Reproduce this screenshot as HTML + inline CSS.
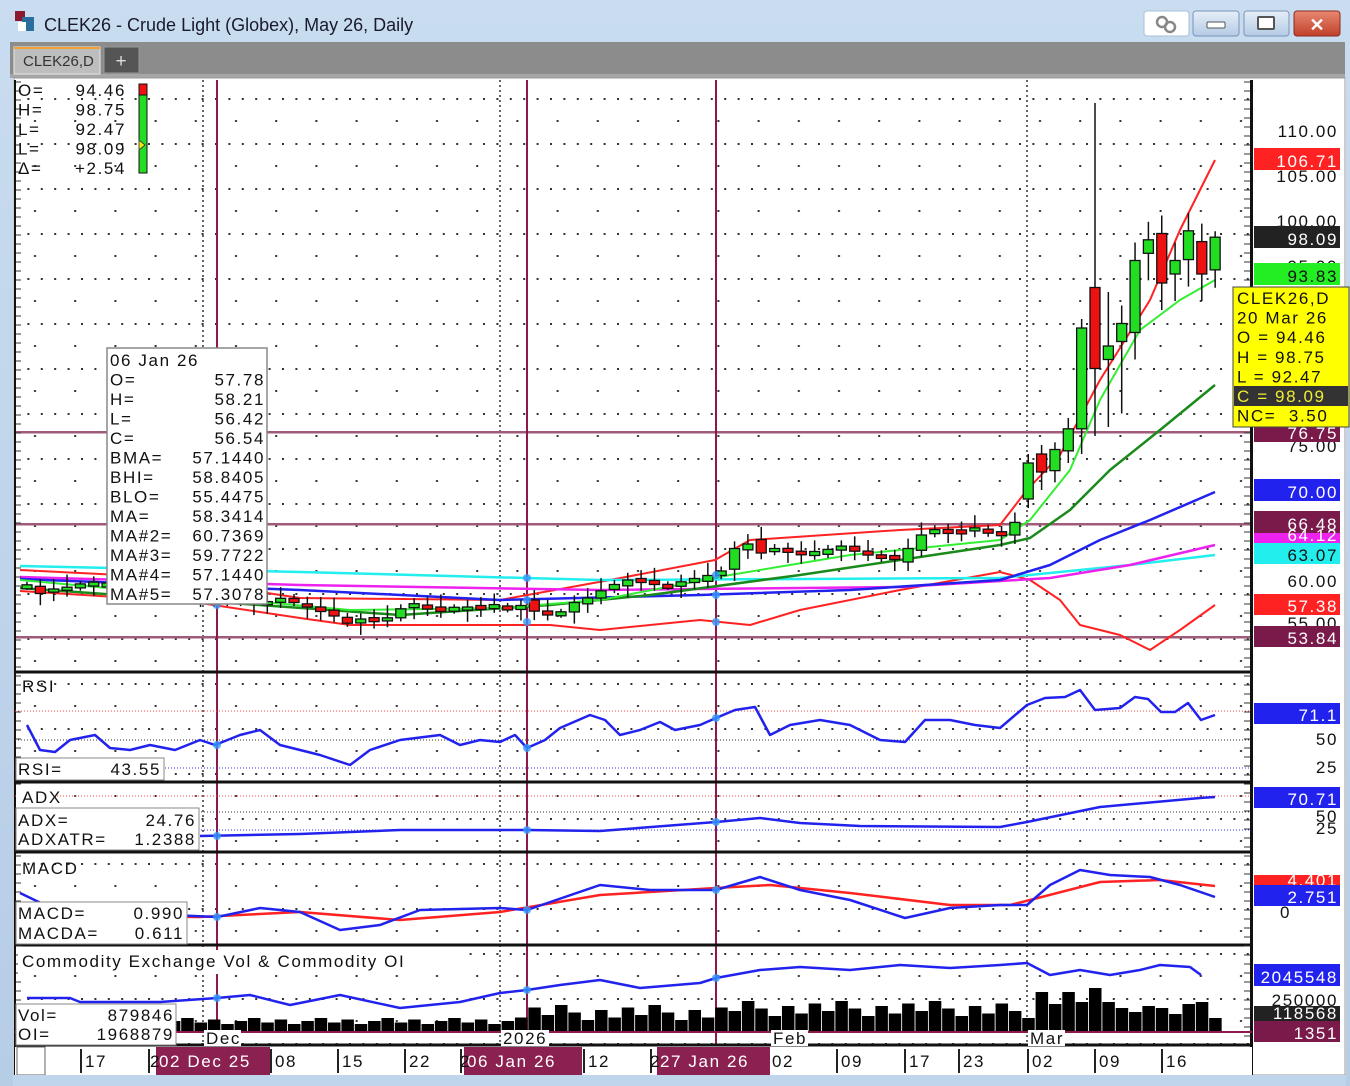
<!DOCTYPE html>
<html><head><meta charset="utf-8"><style>
html,body{margin:0;padding:0;width:1350px;height:1086px;overflow:hidden;background:#bfd5ec}
svg{display:block}
text{font-family:"Liberation Sans",sans-serif}
.m{font-size:17px;letter-spacing:1.6px;fill:#111}
</style></head><body>
<svg id="s" width="1350" height="1086" xmlns="http://www.w3.org/2000/svg">
<defs>
<linearGradient id="tb" x1="0" y1="0" x2="0" y2="1"><stop offset="0" stop-color="#c9dcf0"/><stop offset="1" stop-color="#b6cde6"/></linearGradient>
<linearGradient id="bb" x1="0" y1="0" x2="0" y2="1"><stop offset="0" stop-color="#e6eef8"/><stop offset="1" stop-color="#b4cbe6"/></linearGradient>
<linearGradient id="rb" x1="0" y1="0" x2="0" y2="1"><stop offset="0" stop-color="#e88870"/><stop offset="1" stop-color="#c0402a"/></linearGradient>
<pattern id="dots" x="14" y="0" width="40.2" height="45" patternUnits="userSpaceOnUse"><rect x="0" y="8" width="2" height="2" fill="#333"/><rect x="13.4" y="8" width="2" height="2" fill="#333"/><rect x="26.8" y="8" width="2" height="2" fill="#333"/><rect x="20" y="30" width="2" height="2" fill="#333"/></pattern>
</defs>
<rect width="1350" height="1086" fill="url(#tb)"/>
<rect x="15" y="11" width="10" height="10" fill="#8b1a2e"/><rect x="22" y="17" width="12" height="14" fill="#2a6e9e"/><rect x="18" y="22" width="8" height="9" fill="#fff"/>
<text x="44" y="31" font-size="18" fill="#1a1a2e">CLEK26 - Crude Light (Globex), May 26, Daily</text>
<rect x="1144" y="11" width="45" height="25" rx="3" fill="#fff" stroke="#a9bfd9"/><circle cx="1162" cy="22" r="5" fill="none" stroke="#888" stroke-width="2.5"/><circle cx="1170" cy="27" r="5" fill="none" stroke="#888" stroke-width="2.5"/>
<rect x="1193" y="11" width="46" height="25" rx="3" fill="url(#bb)" stroke="#7a95b8"/><rect x="1207" y="22" width="18" height="6" rx="1" fill="#fff" stroke="#555"/>
<rect x="1244" y="11" width="45" height="25" rx="3" fill="url(#bb)" stroke="#7a95b8"/><rect x="1258" y="17" width="16" height="12" rx="1" fill="#fff" stroke="#555" stroke-width="2"/>
<rect x="1294" y="11" width="46" height="25" rx="3" fill="url(#rb)" stroke="#8a2a20"/><text x="1317" y="31" font-size="18" font-weight="bold" fill="#fff" text-anchor="middle">✕</text>
<rect x="10" y="42" width="1335" height="36" fill="#8c8c8c"/>
<rect x="10" y="74" width="1335" height="4" fill="#a6a6a6"/>
<rect x="14" y="47" width="86" height="27" fill="#bdbdbd" stroke="#e8e8e8"/><rect x="14" y="47" width="86" height="2" fill="#f0a030"/>
<text x="23" y="66" font-size="15" fill="#333">CLEK26,D</text>
<rect x="104" y="47" width="35" height="26" fill="#555" stroke="#999"/><text x="121" y="67" font-size="19" fill="#ddd" text-anchor="middle">+</text>
<rect x="13" y="78" width="1333" height="997" fill="#fff"/>
<rect x="14" y="78" width="1331" height="997" fill="none" stroke="#999" stroke-width="1"/>
<rect x="15" y="80" width="1237" height="965" fill="url(#dots)"/>
<g id="g"></g>
</svg>
<script>
var S=document.getElementById('g'),NS='http://www.w3.org/2000/svg';
function el(t,a,p){var e=document.createElementNS(NS,t);for(var k in a)e.setAttribute(k,a[k]);(p||S).appendChild(e);return e}
function pl(pts,c,w,d){el('polyline',{points:pts,fill:'none',stroke:c,'stroke-width':w||2,'stroke-dasharray':d||'','stroke-linejoin':'round'})}
function tx(x,y,s,o){o=o||{};var f=o.fill;delete o.fill;var e=el('text',Object.assign({x:x,y:y,'class':'m'},o));if(f)e.style.fill=f;e.style.whiteSpace='pre';e.textContent=s;return e}
[203,500,1027].forEach(function(x){pl(x+',80 '+x+',1045','#333',1.5,'2,3')});
[432,524,637].forEach(function(y){el('rect',{x:15,y:y-1,width:1237,height:2.5,fill:'#a05a7a'})});
[217,527,716].forEach(function(x){el('rect',{x:x-1,y:80,width:2,height:965,fill:'#8b1a4a'})});
pl('20,591 100,596 200,603 300,618 350,625 550,625 600,630 700,620 750,625 800,610 900,590 1000,572 1030,580 1060,600 1080,625 1120,635 1150,650 1180,630 1215,605','#f22',2);
pl('20,570 120,575 215,585 300,598 500,600 610,580 715,560 750,540 900,530 1000,525 1027,490 1060,455 1100,380 1150,300 1180,230 1215,160','#f22',2);
pl('20,566 300,572 600,580 1000,578 1130,565 1215,555','#2ee',2.5);
pl('20,577 300,585 600,590 900,587 1050,578 1130,565 1215,545','#e2e',2.5);
pl('20,579 300,590 500,600 700,595 850,590 1000,580 1050,565 1100,540 1150,520 1215,492','#22e',2.5);
pl('20,588 400,615 550,605 650,595 800,575 900,560 1000,545 1030,538 1070,510 1110,470 1160,430 1215,385','#1a8a1a',2.5);
pl('20,580 350,610 500,608 600,600 730,575 850,555 1000,540 1030,520 1070,470 1100,400 1140,330 1180,300 1215,280','#3e3',2);
var C=[59.3,58.5,59,59.2,59.4,59.6,59.5,59.3,59,58.8,58.9,58.7,58.5,58.3,58,57.8,57.5,57.4,57.6,57.8,57.5,57,56.5,56,55.2,55.5,55.6,55.8,56.8,57.2,57,56.5,56.8,57,56.9,57.1,56.8,57,56.54,56.2,56.3,57.5,58,58.8,59.5,60,59.8,59.5,59.3,59.8,60,60.5,61,63.5,64,63,63.5,63.2,62.8,63,63.4,63.6,63.2,62.8,62.4,62.3,63.5,65,65.6,65.4,65.3,65.8,65.2,65,66.4,73,72,74.5,76.8,88,83.5,86,88.5,95.5,97.8,93,95.5,98.8,94,98.09];
var O={38:57.78,53:61.2,55:64.5,66:62,67:63.3,74:65,75:69,76:74,80:92.5,81:84.5,82:86.5,83:87.5,84:96.3,85:98.5,86:94,87:95.6,88:97.6,89:94.46};
var HL={80:[113,76],81:[92,77],89:[98.75,92.47],79:[89,74],78:[78,73],76:[75,70],75:[74,68]};
function Y(p){return 130+(110-p)*9}
for(var i=0;i<C.length;i++){var x=27+i*13.35,c=C[i],o=O[i]!==undefined?O[i]:(i>0?C[i-1]+((i*7)%3-1)*0.15:c),h,l;
 if(HL[i]){h=HL[i][0];l=HL[i][1]}else{h=Math.max(o,c)+0.5+((i*5)%4)*0.3;l=Math.min(o,c)-0.4-((i*3)%4)*0.3}
 if(i>=79&&!HL[i]){h=Math.max(o,c)+2;l=Math.min(o,c)-(i==82?8:3)}
 var col=c>=o?'#2d2':'#e11';
 el('line',{x1:x,y1:Y(h),x2:x,y2:Y(l),stroke:'#111','stroke-width':1.5});
 var t=Y(Math.max(o,c)),b=Y(Math.min(o,c));if(b-t<3){t-=1.5;b=t+4}
 el('rect',{x:x-5,y:t,width:10,height:b-t,fill:col,stroke:'#111','stroke-width':1.3});}
[672,782,852,945,1045].forEach(function(y){el('rect',{x:15,y:y-1.5,width:1237,height:3,fill:'#111'})});
el('rect',{x:1250,y:80,width:3,height:995,fill:'#111'});
el('rect',{x:14,y:80,width:2,height:995,fill:'#111'});
for(var y=82;y<1045;y+=9)el('line',{x1:1244,y1:y,x2:1250,y2:y,stroke:'#333'});
for(var y=82;y<1045;y+=9)el('line',{x1:16,y1:y,x2:21,y2:y,stroke:'#333'});
pl('15,711 1250,711','#f44',1,'1,2');pl('15,740 1250,740','#333',1,'1,2');pl('15,768 1250,768','#33f',1,'1,2');
pl('27,725 40,750 55,752 70,740 95,735 110,748 130,750 150,745 175,750 200,740 215,745 240,735 260,730 280,745 300,750 320,755 350,765 370,750 400,740 440,735 460,745 480,740 500,742 515,735 527,748 545,740 560,728 590,715 605,720 620,735 640,730 660,722 675,730 700,725 716,718 735,710 755,707 770,735 790,725 820,720 850,725 880,740 905,742 925,720 950,720 975,725 1000,728 1027,705 1045,698 1065,697 1080,690 1095,710 1120,708 1135,697 1148,699 1161,712 1175,712 1188,703 1201,720 1215,715','#22e',2.5);
pl('15,796 1250,796','#f44',1,'1,2');pl('15,812 1250,812','#333',1,'1,2');pl('15,830 1250,830','#33f',1,'1,2');
pl('200,836 300,834 400,830 527,830 600,831 716,822 760,818 800,823 860,826 1000,827 1027,822 1100,807 1200,798 1215,797','#22e',2.5);
pl('20,915 200,917 300,912 400,920 500,912 600,895 716,888 770,885 850,893 950,905 1010,905 1030,900 1100,882 1160,880 1215,886','#f22',2.5);
pl('20,893 45,905 100,912 217,917 260,908 300,912 340,930 380,925 420,910 500,908 527,910 600,885 650,890 716,890 760,877 800,890 850,900 905,918 950,908 1000,905 1027,905 1050,885 1080,870 1110,875 1150,877 1180,885 1215,897','#22e',2.5);
for(var i=11;i<90;i++){var x=27+i*13.35,h;
 if(i<37)h=8+((i*7)%5)*1.5;else if(i<75)h=12+((i*11)%7)*2.5+(i>52?4:0);else h=[14,40,28,40,30,44,30,24,20,26,24,18,28,30,14][i-75]||20;
 el('rect',{x:x-6,y:1032-h,width:12.5,height:h,fill:'#000'});}
el('rect',{x:15,y:1031,width:1237,height:2,fill:'#8b1a4a'});
pl('27,998 70,998 80,1002 160,1002 217,998 250,995 290,1005 340,995 400,1008 460,1002 500,993 527,990 560,985 600,980 640,988 700,983 716,978 760,970 800,967 850,970 900,965 950,968 1000,965 1027,963 1050,975 1080,970 1110,975 1140,970 1160,965 1190,967 1201,975','#22e',2.5);
[[217,605],[527,578],[527,600],[527,622],[716,575],[716,595],[716,622],[217,745],[527,748],[716,718],[217,836],[527,830],[716,822],[217,917],[527,910],[716,890],[217,998],[527,990],[716,978]].forEach(function(p){el('circle',{cx:p[0],cy:p[1],r:4,fill:'#39f',opacity:.8})});
el('rect',{x:15,y:1047,width:1237,height:28,fill:'#fff'});
el('rect',{x:17,y:1047,width:28,height:28,fill:'#fff',stroke:'#666'});
[[80,'17'],[148,''],[270,'08'],[337,'15'],[404,'22'],[460,''],[583,'12'],[650,''],[836,'09'],[904,'17'],[958,'23'],[1027,'02'],[1094,'09'],[1161,'16']].forEach(function(a){el('rect',{x:a[0],y:1049,width:2,height:24,fill:'#222'});if(a[1])tx(a[0]+5,1067,a[1],{'font-size':18})});
[[156,270,'02 Dec 25'],[464,582,'06 Jan 26'],[657,770,'27 Jan 26']].forEach(function(a){el('rect',{x:a[0],y:1047,width:a[1]-a[0],height:28,fill:'#8b2150'});tx(a[0]+3,1067,a[2],{fill:'#fff','font-size':18})});
tx(150,1067,'2',{'font-size':18});tx(460,1067,'2',{'font-size':18});tx(650,1067,'2',{'font-size':18});tx(772,1067,'02',{'font-size':18});
[[203,'Dec'],[500,'2026'],[770,'Feb'],[1027,'Mar']].forEach(function(a){el('rect',{x:a[0]+1,y:1030,width:a[1].length*11+4,height:16,fill:'#fff'});tx(a[0]+3,1044,a[1])});
[['O=','94.46'],['H=','98.75'],['L=','92.47'],['L=','98.09'],['Δ=','+2.54']].forEach(function(r,i){tx(18,96+i*19.5,r[0]);tx(126,96+i*19.5,r[1],{'text-anchor':'end'})});
el('rect',{x:139,y:84,width:8,height:89,fill:'#2d2',stroke:'#111'});el('rect',{x:139,y:84,width:8,height:11,fill:'#e11',stroke:'#111'});
el('polygon',{points:'139,140 145,145 139,150',fill:'#ee0',stroke:'#444'});
el('rect',{x:107,y:348,width:160,height:256,fill:'#fff',stroke:'#888','stroke-width':1.5});
tx(110,366,'06 Jan 26');
[['O=','57.78'],['H=','58.21'],['L=','56.42'],['C=','56.54'],['BMA=','57.1440'],['BHI=','58.8405'],['BLO=','55.4475'],['MA=','58.3414'],['MA#2=','60.7369'],['MA#3=','59.7722'],['MA#4=','57.1440'],['MA#5=','57.3078']].forEach(function(r,i){tx(110,385.5+i*19.5,r[0]);tx(265,385.5+i*19.5,r[1],{'text-anchor':'end'})});
tx(22,692,'RSI');el('rect',{x:16,y:758,width:148,height:22,fill:'#fff',stroke:'#888'});tx(18,775,'RSI=');tx(161,775,'43.55',{'text-anchor':'end'});
el('rect',{x:16,y:786,width:40,height:20,fill:'#fff'});tx(22,803,'ADX');
el('rect',{x:16,y:808,width:183,height:42,fill:'#fff',stroke:'#888'});tx(18,826,'ADX=');tx(196,826,'24.76',{'text-anchor':'end'});tx(18,845,'ADXATR=');tx(196,845,'1.2388',{'text-anchor':'end'});
tx(22,874,'MACD');el('rect',{x:16,y:902,width:171,height:42,fill:'#fff',stroke:'#888'});tx(18,919,'MACD=');tx(184,919,'0.990',{'text-anchor':'end'});tx(18,939,'MACDA=');tx(184,939,'0.611',{'text-anchor':'end'});
el('rect',{x:18,y:950,width:445,height:24,fill:'#fff'});tx(22,967,'Commodity Exchange Vol & Commodity OI');
el('rect',{x:16,y:1004,width:160,height:41,fill:'#fff',stroke:'#888'});tx(18,1021,'Vol=');tx(174,1021,'879846',{'text-anchor':'end'});tx(18,1040,'OI=');tx(174,1040,'1968879',{'text-anchor':'end'});
function ax(y,s){tx(1338,y,s,{'text-anchor':'end','font-size':18})}
function bx(y1,y2,bg,s,fg){el('rect',{x:1254,y:y1,width:86,height:y2-y1,fill:bg});tx(1338,y2-3,s,{'text-anchor':'end','font-size':18,fill:fg||'#fff'})}
ax(137,'110.00');ax(182,'105.00');ax(227,'100.00');ax(272,'95.00');ax(452,'75.00');ax(587,'60.00');ax(629,'55.00');
bx(148,170,'#f22','106.71');bx(226,248,'#222','98.09');bx(263,285,'#2e2','93.83','#111');bx(421,442,'#7a1a4a','76.75');
bx(479,501,'#22e','70.00');bx(511,533,'#7a1a4a','66.48');bx(533,544,'#e2e','64.12');bx(543,564,'#2ee','63.07','#111');bx(594,615,'#f22','57.38');bx(626,647,'#7a1a4a','53.84');
bx(703,724,'#22e','71.1');ax(745,'50');ax(773,'25');
bx(787,808,'#22e','70.71');ax(822,'50');ax(834,'25');
bx(875,889,'#f22','4.401');bx(885,906,'#22e','2.751');tx(1280,918,'0',{'font-size':18});
bx(964,986,'#22e','2045548');ax(1006,'250000');bx(1006,1022,'#222','118568');bx(1021,1042,'#7a1a4a','1351');
el('rect',{x:1233,y:287,width:116,height:140,fill:'#ff0',stroke:'#444'});el('rect',{x:1234,y:386,width:114,height:20,fill:'#333'});
[['CLEK26,D','#111'],['20 Mar 26','#111'],['O = 94.46','#111'],['H = 98.75','#111'],['L = 92.47','#111'],['C = 98.09','#ee3'],['NC=  3.50','#111']].forEach(function(r,i){tx(1237,304+i*19.6,r[0],{fill:r[1]})});
el('rect',{x:13,y:1075,width:1333,height:11,fill:'#bfd5ec'});
</script>
</body></html>
